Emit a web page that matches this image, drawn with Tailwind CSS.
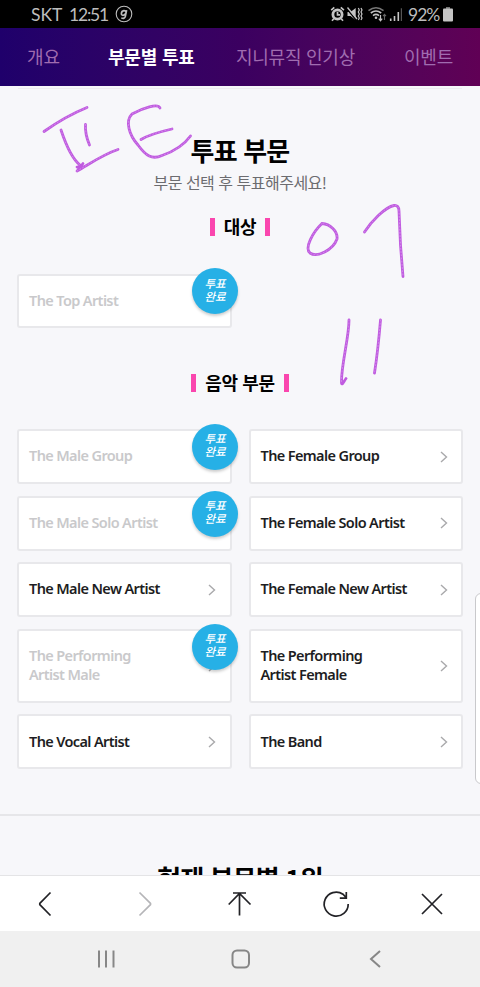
<!DOCTYPE html>
<html lang="ko">
<head>
<meta charset="utf-8">
<meta name="viewport" content="width=device-width">
<title>투표 부문</title>
<script src="https://cdn.jsdelivr.net/npm/@tailwindcss/browser@4"></script>
</head>
<body class="bg-[#f7f7fa]">
<div class="relative w-[480px] h-[987px] overflow-hidden flex flex-col bg-[#f7f7fa] font-['Noto_Sans_CJK_KR',sans-serif] text-black whitespace-nowrap">

  <!-- Status bar -->
  <header class="h-7 shrink-0 bg-black flex items-center pl-[31px] pr-[27px] text-[#bdbdbd] font-['Lato',sans-serif] text-[17.5px] leading-7">
    <span class="w-[35px] tracking-[-0.1px] pt-0.5">SKT</span>
    <span class="w-[41px] tracking-[-1.2px] pt-0.5 ml-[3px]">12:51</span>
    <svg class="ml-[5px]" width="18" height="18" viewBox="0 0 18 18" fill="none" stroke="#bdbdbd"><circle cx="9" cy="9" r="7.8" stroke-width="1.1"/><path d="M11.6 5.2 10.3 11.6Q9.7 14 6.3 13M11.1 7.4Q10.6 5.4 8.8 5.6 6.6 6 6.4 8.3 6.3 10.3 8 10.3 9.8 10.2 10.7 8.3" stroke-width="1.7"/></svg>
    <div class="ml-auto flex items-center">
      <svg width="72" height="18" viewBox="0 0 72 18" fill="none" stroke="#c4c4c4">
        <circle cx="7.5" cy="9.5" r="4.6" stroke-width="2.8"/><path d="M7.5 6.8v3H10M1.2 5.2 4.3 2.4M10.8 2.4 13.9 5.2M3.8 13.8 2 15.8M11.3 13.8 13 15.8" stroke-width="1.7"/>
        <path d="M17.5 7h3l5.200-4v12l-5.200-4h-3z" fill="#c4c4c4" stroke="none"/><path d="M17 4 27 16" stroke="#000" stroke-width="1.4"/><path d="M17.500 2.500 27 14" stroke-width="1.300"/><path d="M28.300 3l1 2-1 2 1 2-1 2 1 2-1 2M31 3l1 2-1 2 1 2-1 2 1 2-1 2" stroke-width="1.2"/>
        <path d="M38.5 5.6Q46-.3 53.5 5.6" stroke="#777" stroke-width="1.5"/><path d="M40.8 8Q46 3.9 51.2 8M43 10.6Q46 8.1 49 10.6" stroke-width="1.6"/><circle cx="46" cy="12.7" r="1.3" fill="#c4c4c4" stroke="none"/><path d="M50.5 10v5.5M48.8 13.7l1.7 2 1.7-2" stroke-width="1.2"/><path d="M54.5 15V9.5M53 11.2l1.5-1.9 1.5 1.9" stroke="#666" stroke-width="1.1"/>
        <path d="M60.7 13.5V16M64.5 11v5M68.3 7v9" stroke-width="1.6"/><path d="M71.4 3.2V16" stroke="#555" stroke-width="1.2"/>
      </svg>
      <span class="ml-[6px] w-[31px] tracking-[-1px] pt-0.5">92%</span>
      <svg class="ml-[4px]" width="10" height="15" viewBox="0 0 10 15"><path d="M3 0h4v2H3z" fill="#777"/><rect y="1.5" width="10" height="13" rx="1" fill="#c4c4c4"/></svg>
    </div>
  </header>

  <!-- Section tabs -->
  <nav class="h-[58px] shrink-0 bg-linear-to-r from-[#1f006b] via-[#3b0060] to-[#600055] flex items-center pl-[27px] pr-[27px] pb-px text-[18px] text-[#a06cb0]">
    <a class="w-[34px] tracking-[0px]">개요</a>
    <a class="ml-[47px] w-[88px] font-bold text-white tracking-[-0.2px]">부문별 투표</a>
    <a class="ml-[40px] w-[121px] tracking-[-0.25px]">지니뮤직 인기상</a>
    <a class="ml-auto tracking-[-0.2px]">이벤트</a>
  </nav>

  <main class="h-[789px] shrink-0 overflow-hidden flex flex-col">
    <div class="h-[3px] shrink-0 border-b border-[#ededf0] mx-[18px]"></div>
    <h1 class="mt-[43px] h-9 shrink-0 leading-9 text-center text-[26px] font-bold tracking-[-0.8px]">투표 부문</h1>
    <p class="mt-[2px] h-6 shrink-0 leading-6 text-center text-[16px] text-[#6c6c70] tracking-[-0.5px]">부문 선택 후 투표해주세요!</p>

    <h2 class="mt-[21px] h-6 shrink-0 flex justify-center items-center gap-[9px] text-[18px] leading-6 font-bold tracking-[-0.4px]"><i class="w-[5px] h-[18px] bg-[#fa46ae]"></i><span class="-mt-0.5">대상</span><i class="w-[5px] h-[18px] bg-[#fa46ae]"></i></h2>

    <section class="mt-[34.5px] shrink-0 px-[17px] grid grid-cols-[214.5px_214.5px] gap-x-[17px] font-['Noto_Sans',sans-serif] font-semibold text-[14.5px] leading-[18.5px] tracking-[-0.62px] text-[#1d1d22]">
      <a class="relative h-[54.5px] bg-white border-2 border-[#e8e8eb] rounded-[3px] flex items-center pl-[10px] pb-[2px] text-[#c9c9cb]">The Top Artist
        <span class="absolute -top-[8px] left-[173px] size-[46px] rounded-full bg-[#26b0e6] shadow-[0_2px_3px_#0003] text-white text-[11.5px] leading-[13px] italic font-medium tracking-normal text-center pt-[9px] font-['Noto_Sans_CJK_KR',sans-serif]">투표<br>완료</span></a>
    </section>

    <h2 class="mt-[43px] h-6 shrink-0 flex justify-center items-center gap-[9px] text-[18px] leading-6 font-bold tracking-[-0.4px]"><i class="w-[5px] h-[18px] bg-[#fa46ae]"></i><span class="-mt-0.5">음악 부문</span><i class="w-[5px] h-[18px] bg-[#fa46ae]"></i></h2>

    <section class="mt-[34px] shrink-0 px-[17px] grid grid-cols-[214.5px_214.5px] grid-rows-[55px_55px_55px_74px_55px] gap-x-[17px] gap-y-[11.6px] font-['Noto_Sans',sans-serif] font-semibold text-[14.5px] leading-[18.5px] tracking-[-0.62px] text-[#1d1d22]">
      <a class="relative bg-white border-2 border-[#e8e8eb] rounded-[3px] flex items-center pl-[10px] pb-[2px] text-[#c9c9cb]">The Male Group
        <span class="absolute -top-[7px] left-[173px] size-[46px] rounded-full bg-[#26b0e6] shadow-[0_2px_3px_#0003] text-white text-[11.5px] leading-[13px] italic font-medium tracking-normal text-center pt-[8px] font-['Noto_Sans_CJK_KR',sans-serif]">투표<br>완료</span></a>
      <a class="bg-white border-2 border-[#e8e8eb] rounded-[3px] flex items-center justify-between pl-[10px] pr-[13px] pb-[2px]">The Female Group<svg class="mt-0.5" width="8" height="12" viewBox="0 0 8 12" fill="none" stroke="#a9a9ab" stroke-width="1.4"><path d="m1 1 5.5 5L1 11"/></svg></a>

      <a class="relative bg-white border-2 border-[#e8e8eb] rounded-[3px] flex items-center pl-[10px] pb-[2px] text-[#c9c9cb]">The Male Solo Artist
        <span class="absolute -top-[7px] left-[173px] size-[46px] rounded-full bg-[#26b0e6] shadow-[0_2px_3px_#0003] text-white text-[11.5px] leading-[13px] italic font-medium tracking-normal text-center pt-[8px] font-['Noto_Sans_CJK_KR',sans-serif]">투표<br>완료</span></a>
      <a class="bg-white border-2 border-[#e8e8eb] rounded-[3px] flex items-center justify-between pl-[10px] pr-[13px] pb-[2px]">The Female Solo Artist<svg class="mt-0.5" width="8" height="12" viewBox="0 0 8 12" fill="none" stroke="#a9a9ab" stroke-width="1.4"><path d="m1 1 5.5 5L1 11"/></svg></a>

      <a class="bg-white border-2 border-[#e8e8eb] rounded-[3px] flex items-center justify-between pl-[10px] pr-[14px] pb-[2px]">The Male New Artist<svg class="mt-0.5" width="8" height="12" viewBox="0 0 8 12" fill="none" stroke="#a9a9ab" stroke-width="1.4"><path d="m1 1 5.5 5L1 11"/></svg></a>
      <a class="bg-white border-2 border-[#e8e8eb] rounded-[3px] flex items-center justify-between pl-[10px] pr-[13px] pb-[2px]">The Female New Artist<svg class="mt-0.5" width="8" height="12" viewBox="0 0 8 12" fill="none" stroke="#a9a9ab" stroke-width="1.4"><path d="m1 1 5.5 5L1 11"/></svg></a>

      <a class="relative bg-white border-2 border-[#e8e8eb] rounded-[3px] flex items-center justify-between pl-[10px] pr-[14px] pb-[2px] text-[#c9c9cb]"><span>The Performing<br>Artist Male</span><svg class="mt-0.5" width="8" height="12" viewBox="0 0 8 12" fill="none" stroke="#a9a9ab" stroke-width="1.4"><path d="m1 1 5.5 5L1 11"/></svg>
        <span class="absolute -top-[7px] left-[173px] size-[46px] rounded-full bg-[#26b0e6] shadow-[0_2px_3px_#0003] text-white text-[11.5px] leading-[13px] italic font-medium tracking-normal text-center pt-[8px] font-['Noto_Sans_CJK_KR',sans-serif]">투표<br>완료</span></a>
      <a class="bg-white border-2 border-[#e8e8eb] rounded-[3px] flex items-center justify-between pl-[10px] pr-[13px] pb-[2px]"><span>The Performing<br>Artist Female</span><svg class="mt-0.5" width="8" height="12" viewBox="0 0 8 12" fill="none" stroke="#a9a9ab" stroke-width="1.4"><path d="m1 1 5.5 5L1 11"/></svg></a>

      <a class="bg-white border-2 border-[#e8e8eb] rounded-[3px] flex items-center justify-between pl-[10px] pr-[14px] pb-[2px]">The Vocal Artist<svg class="mt-0.5" width="8" height="12" viewBox="0 0 8 12" fill="none" stroke="#a9a9ab" stroke-width="1.4"><path d="m1 1 5.5 5L1 11"/></svg></a>
      <a class="bg-white border-2 border-[#e8e8eb] rounded-[3px] flex items-center justify-between pl-[10px] pr-[13px] pb-[2px]">The Band<svg class="mt-0.5" width="8" height="12" viewBox="0 0 8 12" fill="none" stroke="#a9a9ab" stroke-width="1.4"><path d="m1 1 5.5 5L1 11"/></svg></a>
    </section>

    <div class="mt-[45px] h-[2px] shrink-0 bg-[#e6e6e9]"></div>
    <h1 class="mt-[44px] h-9 shrink-0 leading-9 text-center text-[26px] font-bold tracking-[-0.9px]">현재 부문별 1위</h1>
  </main>

  <!-- Browser toolbar -->
  <footer class="h-14 shrink-0 bg-white border-t border-[#e4e4e6] flex justify-between pl-[30px] pr-[33px] items-center">
    <svg width="30" height="30" viewBox="0 0 30 30" fill="none" stroke="#222226" stroke-width="1.7"><path d="M20.5 3.5 9.8 14.3v1.4L20.5 26.5"/></svg>
    <svg class="ml-1" width="30" height="30" viewBox="0 0 30 30" fill="none" stroke="#b5b5b8" stroke-width="1.7"><path d="m9.500 3.500 11 10.800v1.400L9.500 26.500"/></svg>
    <svg class="-ml-0.5" width="30" height="30" viewBox="0 0 30 30" fill="none" stroke="#222226" stroke-width="1.7"><path d="M8 4h13M14.500 4v22.500M3.700 15.500 14.500 4.500l11 11"/></svg>
    <svg width="30" height="30" viewBox="0 0 30 30" fill="none" stroke="#222226" stroke-width="1.700"><path d="M27.200 15A12 12 0 1 1 22 5.200L25 8.500M25.300 3v6.200h-6.500"/></svg>
    <svg width="30" height="30" viewBox="0 0 30 30" fill="none" stroke="#222226" stroke-width="1.700"><path d="m5 5 20 20M25 5 5 25"/></svg>
  </footer>

  <!-- System navigation -->
  <footer class="h-14 shrink-0 bg-[#f0f0f0] flex items-center pl-[96px] pr-[95px] justify-between">
    <svg width="20" height="20" viewBox="0 0 20 20" stroke="#878787" stroke-width="2"><path d="M3 1.500v17M10 1.500v17M17.500 1.500v17"/></svg>
    <svg width="20" height="20" viewBox="0 0 20 20" fill="none" stroke="#878787" stroke-width="2"><rect x="1.500" y="1.500" width="16.500" height="17" rx="4.500"/></svg>
    <svg width="20" height="20" viewBox="0 0 20 20" fill="none" stroke="#878787" stroke-width="2"><path d="m15 2-9 8 9 8"/></svg>
  </footer>

  <!-- Edge panel handle -->
  <div class="absolute left-[475px] top-[593px] w-[14px] h-[191px] bg-white border border-[#c9c9cc] rounded-[6px]"></div>

  <!-- Handwritten notes -->
  <svg class="absolute inset-0 pointer-events-none" width="480" height="420" viewBox="0 0 480 420" fill="none" stroke="#c05be0" stroke-width="2.800" stroke-linecap="round" stroke-linejoin="round">
    <path d="M44 131.500C56 123 71 114 87 107.500M61 130C65 142 71 158 80 165M85.500 124.500C85 131 87 139 89.500 145M83 163.500 77 171C91 163 104 154 118 149.500M77 167l5-1M160 108C158 103 143 108 132 114 125 121 129 135 138 145 146 156 152 160 162 155.500 175 151 184 145 190.500 136M141 139.500C150 134 161 131.500 172 129"/>
    <path d="M322 223.500C313 232 304 248 310 253 317 258 333 250 337 239 338 231 330 224 322 223.500M364.500 232C371 222 385 207 394 205.500 397 205 399 207 399 211L400.500 245 403 276.500M349 320C349 338 341 365 341.500 383 342 386 344 381 346 378.500M380.500 320C379 338 377 357 374.500 373"/>
  </svg>
  <svg class="absolute inset-0 pointer-events-none" width="480" height="420" viewBox="0 0 480 420" fill="none" stroke="#d391ea" stroke-width="0.900" stroke-linecap="round" stroke-dasharray="1 2.200">
    <path d="M44 131.500C56 123 71 114 87 107.500M61 130C65 142 71 158 80 165M85.500 124.500C85 131 87 139 89.500 145M77 171C91 163 104 154 118 149.500M160 108C158 103 143 108 132 114 125 121 129 135 138 145 146 156 152 160 162 155.500 175 151 184 145 190.500 136M141 139.500C150 134 161 131.500 172 129"/>
    <path d="M322 223.500C313 232 304 248 310 253 317 258 333 250 337 239 338 231 330 224 322 223.500M364.500 232C371 222 385 207 394 205.500 397 205 399 207 399 211L400.500 245 403 276.500M349 320C349 338 341 365 341.500 383M380.500 320C379 338 377 357 374.500 373"/>
  </svg>
</div>
</body>
</html>
